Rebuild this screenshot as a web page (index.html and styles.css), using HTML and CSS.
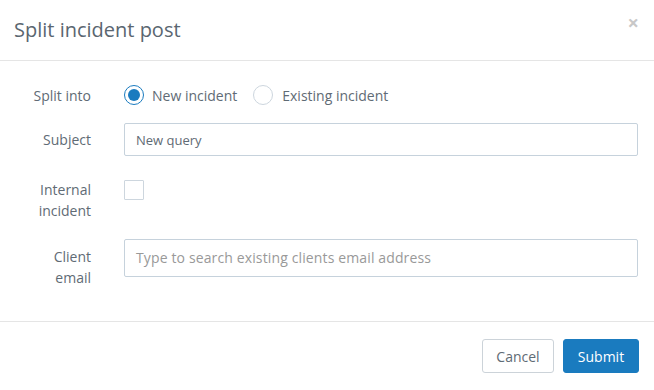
FILE: index.html
```html
<!DOCTYPE html>
<html>
<head>
<meta charset="utf-8">
<link rel="stylesheet" href="styles.css">
</head>
<body>
<div class="modal">
  <div class="modal-header">
    <h4 class="modal-title">Split incident post</h4>
    <span class="close">×</span>
  </div>
  <div class="modal-body">
    <div class="row row-split">
      <div class="label">Split into</div>
      <div class="control radios">
        <label class="radio-opt"><span class="radio checked"></span>New incident</label>
        <label class="radio-opt"><span class="radio"></span>Existing incident</label>
      </div>
    </div>
    <div class="row row-subject">
      <div class="label">Subject</div>
      <div class="control"><div class="input input-subject">New query</div></div>
    </div>
    <div class="row row-internal">
      <div class="label">Internal<br>incident</div>
      <div class="control"><span class="checkbox"></span></div>
    </div>
    <div class="row row-email">
      <div class="label label-email">Client<br>email</div>
      <div class="control"><div class="input input-email placeholder">Type to search existing clients email address</div></div>
    </div>
  </div>
  <div class="modal-footer">
    <button class="btn btn-default">Cancel</button>
    <button class="btn btn-primary">Submit</button>
  </div>
</div>
</body>
</html>
```
FILE: styles.css
```css
* { box-sizing: border-box; }
html, body { margin: 0; padding: 0; background: #fff; }
body {
  font-family: "Open Sans", "Liberation Sans", sans-serif;
  font-size: 14px;
  color: #5f6b75;
}
.modal { width: 654px; height: 390px; background: #fff; }
.modal-header {
  height: 61px;
  border-bottom: 1px solid #e5e5e5;
  display: flex;
  align-items: center;
  justify-content: space-between;
  padding: 0 16px 0 14px;
}
.modal-title {
  margin: 0;
  font-size: 20px;
  font-weight: 400;
  color: #5a6670;
  line-height: 28px;
}
.close {
  font-size: 20px;
  font-weight: 700;
  color: #c8c8c8;
  line-height: 20px;
  align-self: flex-start;
  margin-top: 13px;
  margin-right: -1px;
}
.modal-body {
  padding: 19px 16px 33px 14px;
}
.row {
  display: grid;
  grid-template-columns: 77px 1fr;
  column-gap: 33px;
}
.label {
  text-align: right;
  line-height: 21px;
  color: #5f6b75;
}
.row-split { height: 30px; align-items: center; margin-bottom: 13px; }
.row-subject { align-items: center; margin-bottom: 23px; }
.row-internal { margin-bottom: 18px; }
.label-email { padding-top: 7px; }
.radios { display: flex; align-items: center; gap: 16px; }
.radio-opt { display: flex; align-items: center; gap: 8px; }
.radio-opt + .radio-opt { gap: 9px; }
.radio {
  width: 20px; height: 20px;
  border: 1px solid #cdd6de;
  border-radius: 50%;
  display: inline-flex;
  align-items: center;
  justify-content: center;
}
.radio.checked { border: 1.5px solid #1a7bbf; }
.radio.checked::after {
  content: "";
  width: 12px; height: 12px;
  border-radius: 50%;
  background: #1a7bbf;
}
.input {
  border: 1px solid #c6d2dc;
  border-radius: 2px;
  padding: 0 11px;
  font-size: 13px;
  display: flex;
  align-items: center;
  color: #5f6b75;
}
.input-subject { height: 33px; }
.input-email { height: 38px; font-size: 14px; letter-spacing: 0.13px; padding-bottom: 2px; }
.placeholder { color: #999; }
.checkbox {
  display: block;
  width: 20px; height: 20px;
  border: 1px solid #cdd6de;
  border-radius: 1px;
  margin-top: 1px;
}
.modal-footer {
  border-top: 1px solid #e5e5e5;
  display: flex;
  justify-content: flex-end;
  gap: 9px;
  padding: 17px 15px 0 0;
}
.btn {
  font-family: "Open Sans", "Liberation Sans", sans-serif;
  font-size: 14px;
  height: 34px;
  border-radius: 3px;
  padding: 0;
  cursor: pointer;
}
.btn-default {
  background: #fff;
  border: 1px solid #ccd3d9;
  color: #5f6b75;
  width: 72px;
}
.btn-primary {
  background: #1a7bbf;
  border: 1px solid #1a7bbf;
  color: #fff;
  width: 76px;
  font-weight: 400;
}
```
